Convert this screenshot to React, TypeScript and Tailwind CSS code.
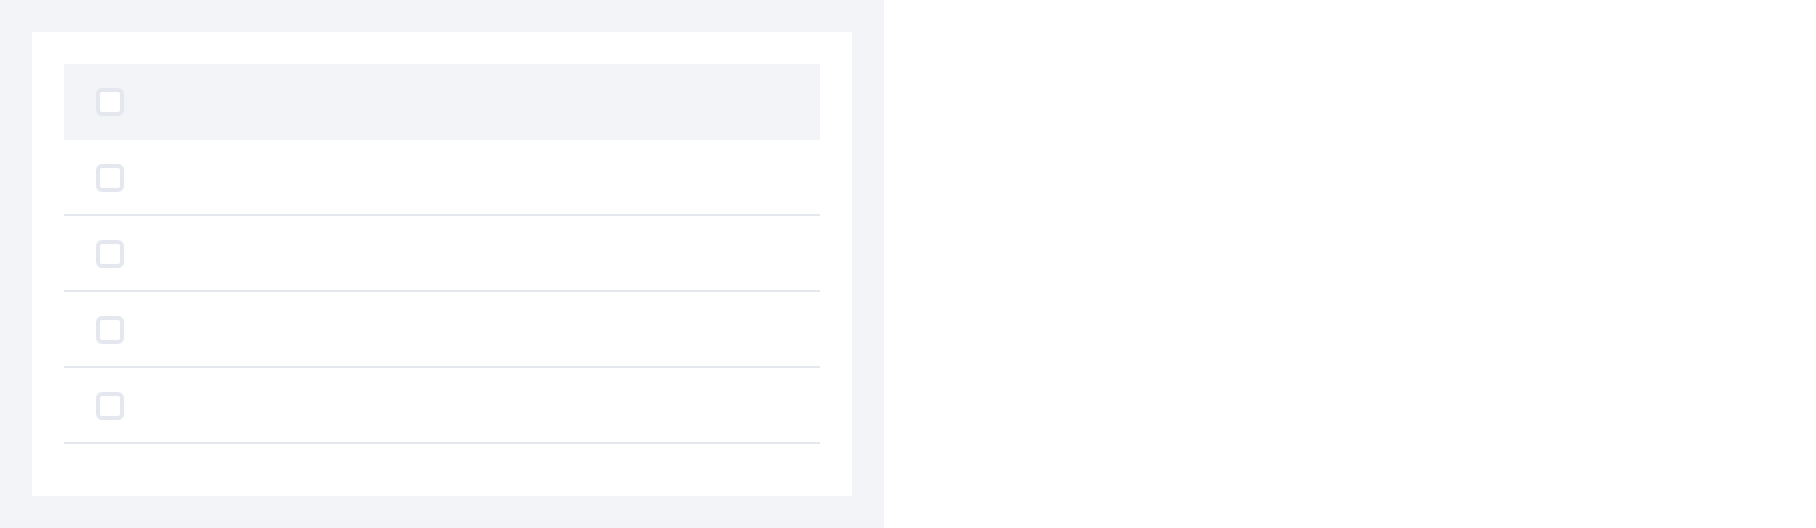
import React from "react";

function Box() {
  return <div className="w-7 h-7 rounded-md border-4 border-[#e4e7ee] bg-white" />;
}

export default function App() {
  return (
    <div className="w-[884px] h-[528px] bg-[#f3f4f8] p-8" style={{ fontFamily: '"Liberation Sans", sans-serif' }}>
      <div className="bg-white h-[464px] px-8 pt-8">
        <div className="flex flex-col">
          <div className="bg-[#f3f4f8] px-8 py-6 flex items-center">
            <Box />
          </div>
          {[0, 1, 2, 3].map((i) => (
            <div key={i} className="px-8 pt-6 pb-[22px] border-b-2 border-[#e4e7ee] flex items-start">
              <Box />
            </div>
          ))}
        </div>
      </div>
    </div>
  );
}
